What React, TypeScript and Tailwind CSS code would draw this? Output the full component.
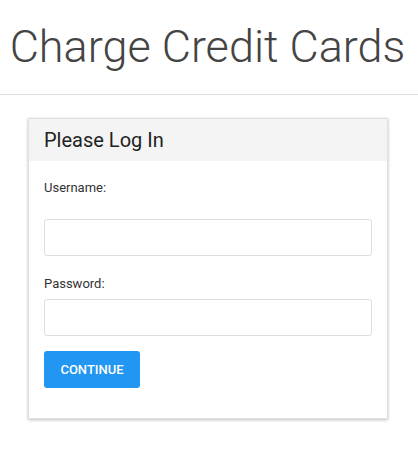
export default function App() {
  return (
    <div className="w-[418px] min-h-[451px] bg-white" style={{ fontFamily: "Roboto, 'Liberation Sans', sans-serif" }}>
      <div className="pt-[20px] pb-[20px] border-b border-[#dddddd] flex justify-center">
        <h1 className="text-[45px] leading-[54px] font-light text-[#444444] pr-[3px]">Charge Credit Cards</h1>
      </div>
      <div className="ml-[28px] mt-[23px] w-[360px] border border-[#e0e0e0] bg-white shadow-[0_1px_3px_rgba(0,0,0,0.25)]">
        <div className="bg-[#f4f4f4] px-[15px] py-[10px]">
          <h2 className="text-[20px] leading-[22px] text-[#222222]">Please Log In</h2>
        </div>
        <div className="px-[15px] pt-[19px] pb-[30px]">
          <label className="block text-[13px] leading-[15px] text-[#333333]">Username:</label>
          <input type="text" className="block mt-[24px] w-[328px] h-[37px] border border-[#dddddd] rounded-[3px] px-2 outline-none" />
          <label className="block mt-[20px] text-[13px] leading-[15px] text-[#333333]">Password:</label>
          <input type="password" className="block mt-[8px] w-[328px] h-[37px] border border-[#dddddd] rounded-[3px] px-2 outline-none" />
          <button className="mt-[15px] w-[96px] h-[37px] bg-[#2196f3] rounded-[3px] text-white text-[13px] font-medium uppercase flex items-center justify-center">
            Continue
          </button>
        </div>
      </div>
    </div>
  );
}
